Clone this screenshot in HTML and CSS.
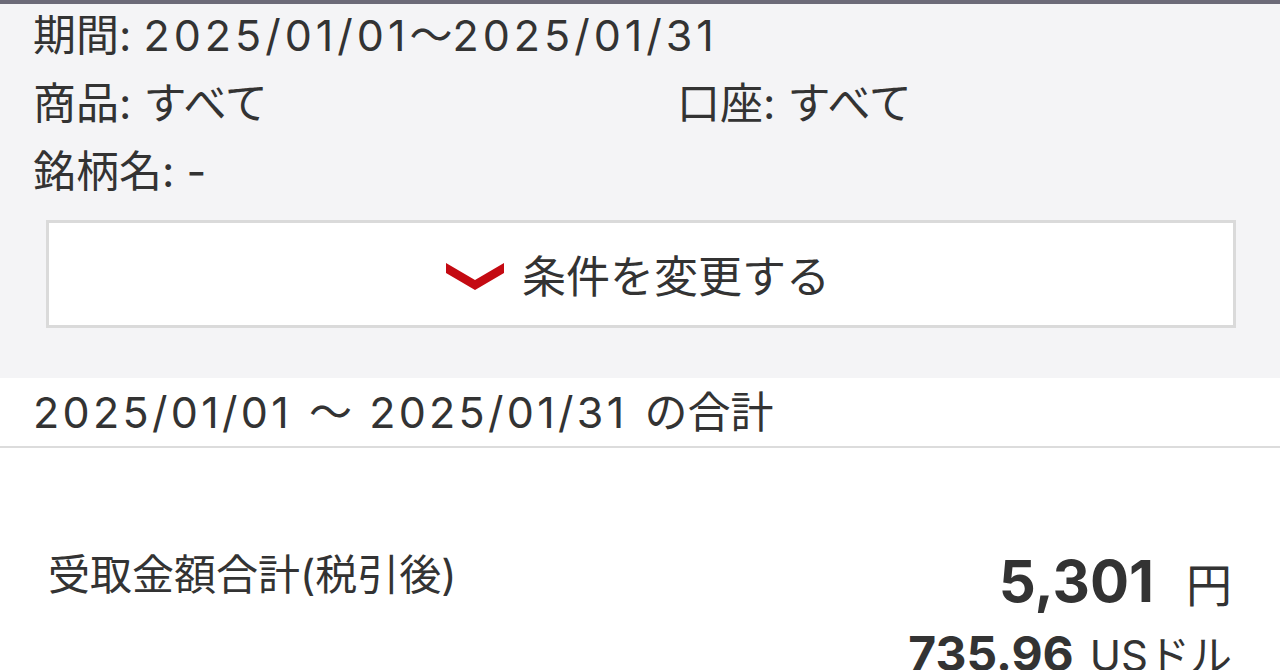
FILE: index.html
```html
<!DOCTYPE html>
<html lang="ja">
<head>
<meta charset="utf-8">
<link rel="stylesheet" href="styles.css">
</head>
<body>
<div class="topbar"></div>
<section class="filters">
  <div class="row">期間: <span class="n">2025/01/01</span>〜<span class="n">2025/01/31</span></div>
  <div class="row two">
    <span class="col">商品: すべて</span>
    <span class="col">口座: すべて</span>
  </div>
  <div class="row">銘柄名: -</div>
  <button class="change">
    <svg class="chev" width="58" height="30" viewBox="0 0 58 30"><path d="M0 2 L29 19 L58 2 L58 12 L29 29 L0 12 Z" fill="#c40a12"/></svg>
    <span>条件を変更する</span>
  </button>
</section>
<div class="period"><span class="n">2025/01/01</span> 〜 <span class="n">2025/01/31</span> の合計</div>
<section class="totals">
  <div class="total-row">
    <div class="label">受取金額合計(税引後)</div>
    <div class="values">
      <div class="val"><b class="num">5,301</b><span class="unit">円</span></div>
      <div class="val usd"><b class="num">735.96</b><span class="unit">USドル</span></div>
    </div>
  </div>
</section>
</body>
</html>
```
FILE: styles.css
```css
html, body {
  margin: 0;
  padding: 0;
  background: #fff;
  font-family: Inter, "Noto Sans CJK JP", sans-serif;
  color: #333;
  overflow: hidden;
}
.topbar {
  height: 4px;
  background: #6c6a78;
}
.filters {
  background: #f4f4f6;
  padding: 0 45px 50px 33px;
}
.row {
  font-size: 43px;
  line-height: 63px;
  height: 68px;
  font-weight: 400;
}
.n {
  letter-spacing: 4px;
}
.row.two {
  display: flex;
}
.row .col:first-child {
  width: 644px;
}
.change {
  margin: 12px 0 0 13px;
  width: 1190px;
  height: 108px;
  background: #fff;
  border: 3px solid #dadada;
  display: flex;
  align-items: center;
  justify-content: center;
  gap: 18px;
  font-family: Inter, "Noto Sans CJK JP", sans-serif;
  font-size: 44px;
  color: #333;
  padding: 0;
}
.chev { margin-top: 4px; margin-left: -6px; }
.period {
  font-size: 43px;
  line-height: 68px;
  padding-left: 33px;
  border-bottom: 2px solid #dcdcdc;
  word-spacing: 5px;
}
.period .n { letter-spacing: 3.3px; }
.totals {
  padding: 98px 48px 0 48px;
}
.total-row {
  display: flex;
  justify-content: space-between;
}
.label {
  font-size: 42px;
  line-height: 50px;
  margin-top: 4px;
}
.values {
  display: flex;
  flex-direction: column;
  align-items: flex-end;
}
.val {
  display: flex;
  align-items: baseline;
  line-height: 70px;
}
.num {
  font-size: 58px;
  font-weight: 700;
}
.unit {
  font-size: 46px;
  margin-left: 32px;
}
.usd { margin-top: -1px; }
.usd .num { font-size: 48px; }
.usd .unit { font-size: 42px; margin-left: 16px; }
```
